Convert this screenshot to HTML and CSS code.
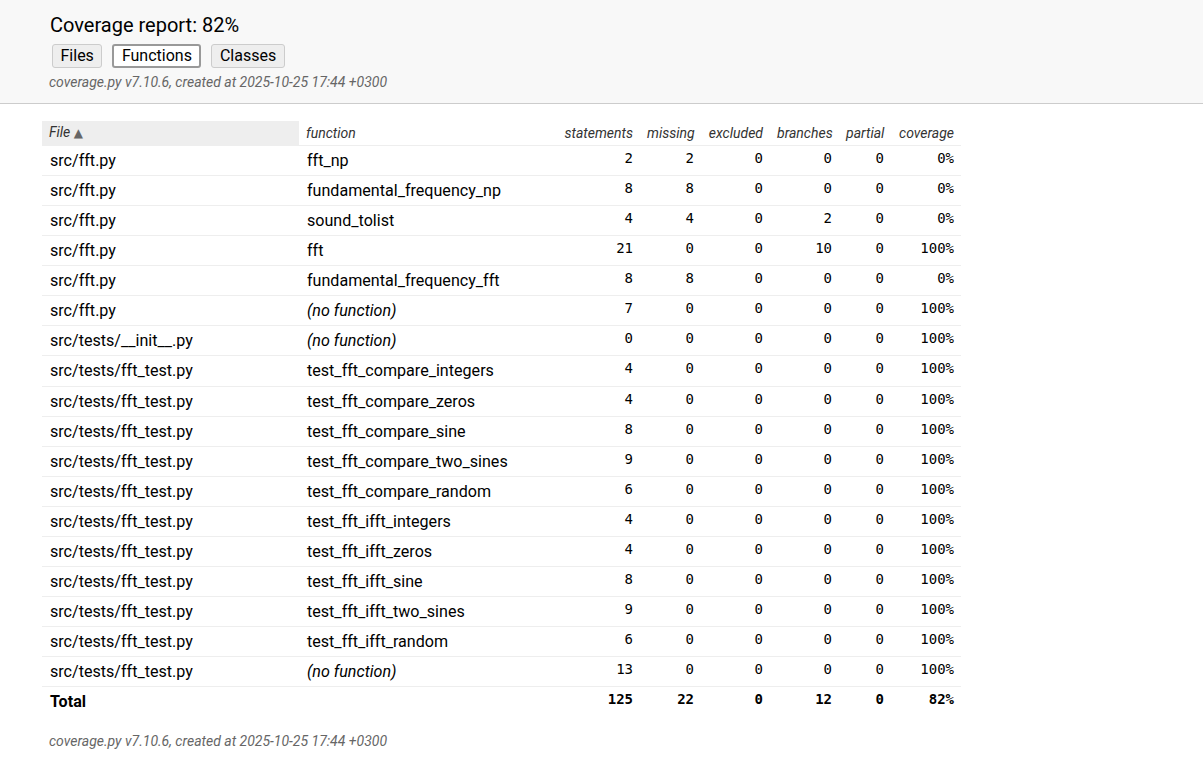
FILE: index.html
```html
<!DOCTYPE html>
<html>
<head>
<meta charset="utf-8">
<title>Coverage report</title>
<link rel="stylesheet" href="styles.css">
</head>
<body>
<header class="page-header">
  <div class="header-content">
    <h1 class="title">Coverage report: 82%</h1>
    <nav class="nav">
      <a class="button">Files</a>
      <a class="button current">Functions</a>
      <a class="button">Classes</a>
    </nav>
    <p class="meta">coverage.py v7.10.6, created at 2025-10-25 17:44 +0300</p>
  </div>
</header>
<main class="index">
  <table class="report">
    <colgroup>
      <col class="c-file"><col class="c-func"><col class="c-stm"><col class="c-miss"><col class="c-exc"><col class="c-br"><col class="c-part"><col class="c-cov">
    </colgroup>
    <thead>
      <tr>
        <th class="name sorted">File <span class="arrows">▲</span></th>
        <th class="name">function</th>
        <th>statements</th>
        <th>missing</th>
        <th>excluded</th>
        <th>branches</th>
        <th>partial</th>
        <th>coverage</th>
      </tr>
    </thead>
    <tbody>
      <tr><td class="name">src/fft.py</td><td class="name">fft_np</td><td>2</td><td>2</td><td>0</td><td>0</td><td>0</td><td>0%</td></tr>
      <tr><td class="name">src/fft.py</td><td class="name">fundamental_frequency_np</td><td>8</td><td>8</td><td>0</td><td>0</td><td>0</td><td>0%</td></tr>
      <tr><td class="name">src/fft.py</td><td class="name">sound_tolist</td><td>4</td><td>4</td><td>0</td><td>2</td><td>0</td><td>0%</td></tr>
      <tr><td class="name">src/fft.py</td><td class="name">fft</td><td>21</td><td>0</td><td>0</td><td>10</td><td>0</td><td>100%</td></tr>
      <tr><td class="name">src/fft.py</td><td class="name">fundamental_frequency_fft</td><td>8</td><td>8</td><td>0</td><td>0</td><td>0</td><td>0%</td></tr>
      <tr><td class="name">src/fft.py</td><td class="name no-noun">(no function)</td><td>7</td><td>0</td><td>0</td><td>0</td><td>0</td><td>100%</td></tr>
      <tr><td class="name">src/tests/__init__.py</td><td class="name no-noun">(no function)</td><td>0</td><td>0</td><td>0</td><td>0</td><td>0</td><td>100%</td></tr>
      <tr><td class="name">src/tests/fft_test.py</td><td class="name">test_fft_compare_integers</td><td>4</td><td>0</td><td>0</td><td>0</td><td>0</td><td>100%</td></tr>
      <tr><td class="name">src/tests/fft_test.py</td><td class="name">test_fft_compare_zeros</td><td>4</td><td>0</td><td>0</td><td>0</td><td>0</td><td>100%</td></tr>
      <tr><td class="name">src/tests/fft_test.py</td><td class="name">test_fft_compare_sine</td><td>8</td><td>0</td><td>0</td><td>0</td><td>0</td><td>100%</td></tr>
      <tr><td class="name">src/tests/fft_test.py</td><td class="name">test_fft_compare_two_sines</td><td>9</td><td>0</td><td>0</td><td>0</td><td>0</td><td>100%</td></tr>
      <tr><td class="name">src/tests/fft_test.py</td><td class="name">test_fft_compare_random</td><td>6</td><td>0</td><td>0</td><td>0</td><td>0</td><td>100%</td></tr>
      <tr><td class="name">src/tests/fft_test.py</td><td class="name">test_fft_ifft_integers</td><td>4</td><td>0</td><td>0</td><td>0</td><td>0</td><td>100%</td></tr>
      <tr><td class="name">src/tests/fft_test.py</td><td class="name">test_fft_ifft_zeros</td><td>4</td><td>0</td><td>0</td><td>0</td><td>0</td><td>100%</td></tr>
      <tr><td class="name">src/tests/fft_test.py</td><td class="name">test_fft_ifft_sine</td><td>8</td><td>0</td><td>0</td><td>0</td><td>0</td><td>100%</td></tr>
      <tr><td class="name">src/tests/fft_test.py</td><td class="name">test_fft_ifft_two_sines</td><td>9</td><td>0</td><td>0</td><td>0</td><td>0</td><td>100%</td></tr>
      <tr><td class="name">src/tests/fft_test.py</td><td class="name">test_fft_ifft_random</td><td>6</td><td>0</td><td>0</td><td>0</td><td>0</td><td>100%</td></tr>
      <tr><td class="name">src/tests/fft_test.py</td><td class="name no-noun">(no function)</td><td>13</td><td>0</td><td>0</td><td>0</td><td>0</td><td>100%</td></tr>
    </tbody>
    <tfoot>
      <tr class="total"><td class="name">Total</td><td class="name"></td><td>125</td><td>22</td><td>0</td><td>12</td><td>0</td><td>82%</td></tr>
    </tfoot>
  </table>
  <p class="meta footer-meta">coverage.py v7.10.6, created at 2025-10-25 17:44 +0300</p>
</main>
</body>
</html>
```

FILE: styles.css
```css
html, body {
  margin: 0;
  padding: 0;
}
body {
  font-family: Roboto, "Liberation Sans", sans-serif;
  font-size: 16px;
  color: #000;
  background: #fff;
}
.page-header {
  background: #f8f8f8;
  border-bottom: 1px solid #ccc;
  width: 100%;
}
.header-content {
  padding: 13px 48px 12px 48px;
}
.title {
  margin: 0;
  padding-left: 2px;
  font-size: 20px;
  font-weight: normal;
  line-height: 24px;
}
.nav {
  display: flex;
  gap: 10px;
  margin: 7px 0 0 4px;
}
.button {
  display: block;
  box-sizing: border-box;
  height: 24px;
  line-height: 20px;
  padding: 1px 7.5px;
  border: 1px solid #ccc;
  border-radius: 3px;
  background: #eee;
  color: #000;
  font-size: 16px;
  text-decoration: none;
}
.button.current {
  border: 2px solid #999;
  background: #fff;
  padding: 0 7.5px;
}
.meta {
  margin: 6px 0 0 1px;
  font-size: 14px;
  line-height: 17px;
  font-style: italic;
  color: #666;
}
.index {
  padding: 17px 0 0 42px;
}
.report {
  table-layout: fixed;
  width: 919px;
  border-collapse: separate;
  border-spacing: 0;
  font-family: "DejaVu Sans Mono", monospace;
  font-size: 14px;
}
.c-file { width: 257px; }
.c-func { width: 258px; }
.c-stm { width: 83px; }
.c-miss { width: 61px; }
.c-exc { width: 69px; }
.c-br { width: 69px; }
.c-part { width: 52px; }
.c-cov { width: 70px; }
.report th {
  font-family: Roboto, "Liberation Sans", sans-serif;
  font-style: italic;
  font-weight: normal;
  color: #333;
  font-size: 14px;
  line-height: 17px;
  padding: 3px 7px 3px 7px;
  text-align: right;
  border-bottom: 1px solid #eee;
  white-space: nowrap;
}
.report th.name {
  text-align: left;
  padding-left: 7px;
}
.report th.sorted {
  background: #eee;
}
.arrows {
  color: #666;
  font-family: "DejaVu Sans", sans-serif;
  font-size: 12px;
  font-style: normal;
}
.report td {
  text-align: right;
  padding: 2px 7px 6px 7px;
  line-height: 21.07px;
  border-bottom: 1px solid #eee;
  white-space: nowrap;
}
.report td.name {
  text-align: left;
  font-family: Roboto, "Liberation Sans", sans-serif;
  font-size: 16.1px;
  padding: 4px 8px;
}
.report td.no-noun {
  font-style: italic;
}
.report tr.total td {
  font-weight: bold;
  border-bottom: none;
}
.footer-meta {
  margin: 17px 0 0 7px;
}
```
